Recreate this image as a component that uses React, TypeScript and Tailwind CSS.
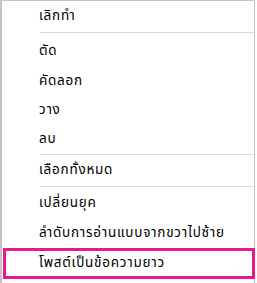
const font = { fontFamily: '"Noto Sans Thai", Tahoma, "Liberation Sans", sans-serif' };

function Item({ label, className = 'h-[30px]' }: { label: string; className?: string }) {
  return (
    <div className={`flex items-center pl-[37px] text-[13.5px] tracking-[0.75px] text-black ${className}`}>
      {label}
    </div>
  );
}

function Separator() {
  return <div className="ml-[38px] h-px bg-[#dadada]" />;
}

export default function App() {
  return (
    <div className="h-[283px] w-[257px] overflow-hidden bg-white" style={font}>
      <div className="h-[290px] w-[255px] border-l-2 border-r border-t border-[#c4c4c4] bg-white">
        <Item label="เลิกทำ" className="h-[31px]" />
        <Separator />
        <div className="h-[3px]" />
        <Item label="ตัด" />
        <Item label="คัดลอก" />
        <Item label="วาง" className="h-[29px]" />
        <Item label="ลบ" className="h-[29px]" />
        <Separator />
        <Item label="เลือกทั้งหมด" className="h-[31px]" />
        <Separator />
        <div className="h-px" />
        <Item label="เปลี่ยนยุค" />
        <Item label="ลำดับการอ่านแบบจากขวาไปซ้าย" />
        <div className="-mr-px ml-px flex h-[31px] items-center border-[3px] border-[#e8178a] pl-[33px] text-[13.5px] tracking-[0.75px] text-black">
          โพสต์เป็นข้อความยาว
        </div>
      </div>
    </div>
  );
}
